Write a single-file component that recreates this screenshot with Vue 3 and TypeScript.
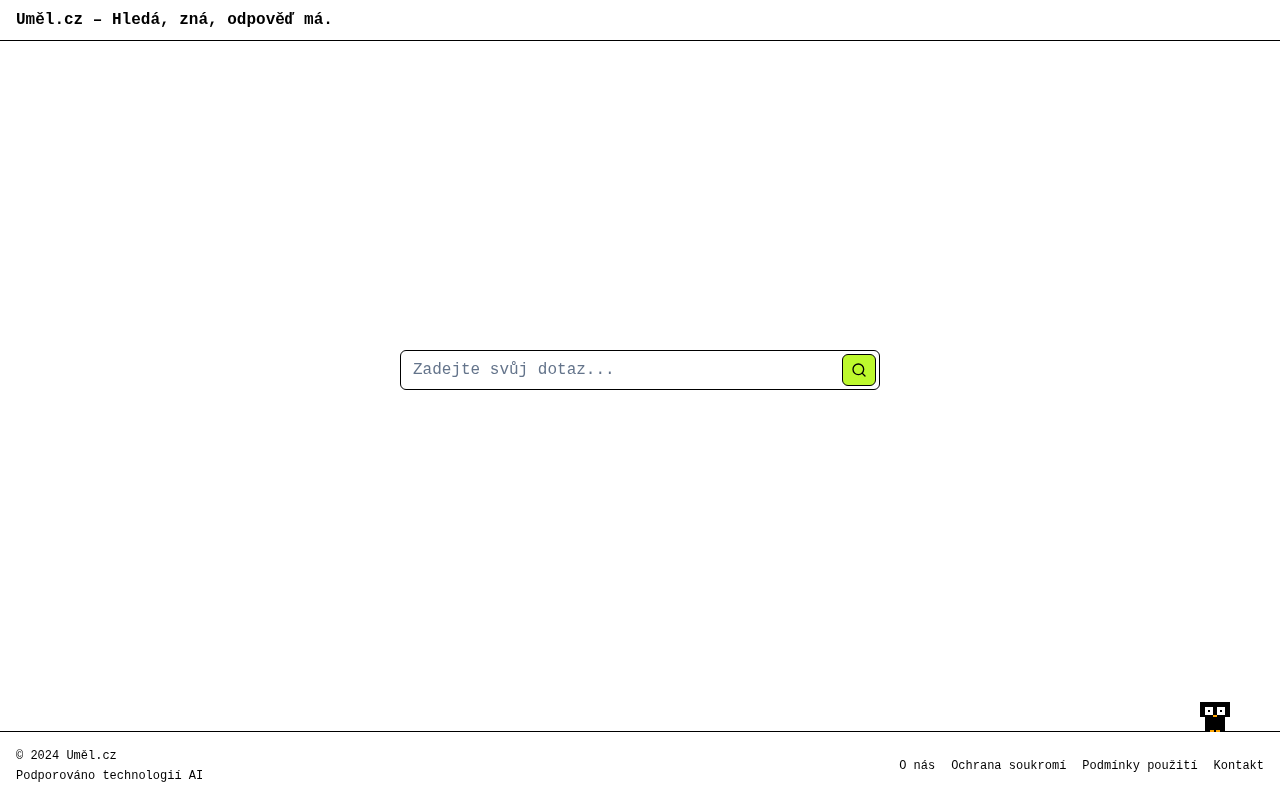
<script setup lang="ts">
import { ref } from 'vue'

const query = ref('')
const links = ['O nás', 'Ochrana soukromí', 'Podmínky použití', 'Kontakt']
</script>

<template>
  <div class="page">
    <header class="top">
      <h1>Uměl.cz – Hledá, zná, odpověď má.</h1>
    </header>

    <main class="content">
      <form class="search" @submit.prevent>
        <input v-model="query" type="text" placeholder="Zadejte svůj dotaz..." />
        <button type="submit" aria-label="Hledat">
          <svg width="16" height="16" viewBox="0 0 24 24" fill="none" stroke="#000" stroke-width="2" stroke-linecap="round" stroke-linejoin="round">
            <circle cx="11" cy="11" r="8" />
            <path d="m21 21-4.3-4.3" />
          </svg>
        </button>
      </form>
    </main>

    <footer class="bottom">
      <svg class="penguin" width="30" height="30" viewBox="0 0 30 30" shape-rendering="crispEdges">
        <rect x="0" y="0" width="30" height="15" fill="#000" />
        <rect x="5" y="15" width="20" height="15" fill="#000" />
        <rect x="5" y="5" width="8" height="8" fill="#fff" />
        <rect x="17" y="5" width="8" height="8" fill="#fff" />
        <rect x="8" y="8" width="2" height="2" fill="#000" />
        <rect x="20" y="8" width="2" height="2" fill="#000" />
        <rect x="13" y="13" width="4" height="2" fill="#ffa500" />
        <rect x="10" y="28" width="4" height="2" fill="#ffa500" />
        <rect x="16" y="28" width="4" height="2" fill="#ffa500" />
      </svg>
      <div class="info">
        <p>© 2024 Uměl.cz</p>
        <p>Podporováno technologií AI</p>
      </div>
      <nav class="links">
        <a v-for="link in links" :key="link" href="#">{{ link }}</a>
      </nav>
    </footer>
  </div>
</template>

<style>
body {
  margin: 0;
  background: #fff;
}
</style>

<style scoped>
.page {
  display: flex;
  flex-direction: column;
  height: 100vh;
  color: #000;
  font-family: "Liberation Mono", monospace;
  will-change: transform;
}

.top {
  height: 40px;
  padding: 0 16px;
  display: flex;
  align-items: center;
  border-bottom: 1px solid #000;
}

h1 {
  margin: 0;
  font-size: 16px;
  font-weight: 700;
}

.content {
  flex: 1;
  display: flex;
  align-items: center;
  justify-content: center;
  padding-bottom: 32px;
}

.search {
  box-sizing: border-box;
  width: 480px;
  height: 40px;
  display: flex;
  align-items: center;
  padding: 3px 3px 3px 12px;
  border: 1px solid #000;
  border-radius: 6px;
}

input {
  flex: 1;
  min-width: 0;
  padding: 0;
  border: 0;
  outline: 0;
  background: transparent;
  font-family: inherit;
  font-size: 16px;
}

input::placeholder {
  color: #64748b;
  opacity: 1;
}

button {
  box-sizing: border-box;
  width: 34px;
  height: 32px;
  padding: 0;
  display: flex;
  align-items: center;
  justify-content: center;
  border: 1px solid #000;
  border-radius: 6px;
  background: #bdf92d;
}

.bottom {
  position: relative;
  box-sizing: border-box;
  height: 69px;
  padding: 0 16px;
  display: flex;
  align-items: center;
  justify-content: space-between;
  border-top: 1px solid #000;
  font-size: 12px;
}

.penguin {
  position: absolute;
  right: 50px;
  top: -30px;
}

.info p {
  margin: 0;
  line-height: 20px;
}

.links {
  display: flex;
  gap: 16px;
}

.links a {
  color: #000;
  text-decoration: none;
}
</style>
